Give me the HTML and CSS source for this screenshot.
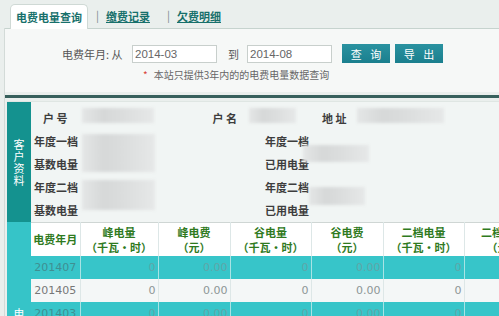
FILE: index.html
```html
<!DOCTYPE html>
<html lang="zh-CN">
<head>
  <meta charset="UTF-8">
  <title>电费电量查询</title>
  <link rel="stylesheet" href="styles.css">
</head>
<body>
  <div class="tabs">
    <span class="tab active">电费电量查询</span>
    <span class="sep">|</span>
    <a class="tab">缴费记录</a>
    <span class="sep">|</span>
    <a class="tab">欠费明细</a>
  </div>

  <div class="page">
    <div class="query">
      <div class="query-row">
        <span class="lbl">电费年月: 从</span>
        <input type="text" value="2014-03">
        <span class="to">到</span>
        <input type="text" value="2014-08">
        <button class="btn first">查 询</button>
        <button class="btn">导 出</button>
      </div>
      <div class="note"><span class="star">*</span>本站只提供3年内的的电费电量数据查询</div>
    </div>

    <div class="rule"></div>

    <div class="section info">
      <div class="side"><span class="side-text">客户资料</span></div>
      <div class="info-body">
        <div class="info-top">
          <span class="key k1">户 号</span>
          <span class="blur b1"></span>
          <span class="key k2">户 名</span>
          <span class="blur b2"></span>
          <span class="key k3">地 址</span>
          <span class="blur b3"></span>
        </div>
        <div class="info-grid">
          <span class="key r2 c1">年度一档</span>
          <span class="key r3 c1">基数电量</span>
          <span class="key r4 c1">年度二档</span>
          <span class="key r5 c1">基数电量</span>
          <span class="blur left top"></span>
          <span class="blur left bottom"></span>
          <span class="key r2 c2">年度一档</span>
          <span class="key r3 c2">已用电量</span>
          <span class="key r4 c2">年度二档</span>
          <span class="key r5 c2">已用电量</span>
          <span class="blur right top"></span>
          <span class="blur right bottom"></span>
        </div>
      </div>
    </div>

    <div class="section bill">
      <div class="side light"><span class="side-text">电费信息</span></div>
      <table class="grid">
        <colgroup>
          <col class="w-month">
          <col class="w-a">
          <col class="w-b">
          <col class="w-c">
          <col class="w-b">
          <col class="w-c">
          <col class="w-a">
        </colgroup>
        <thead>
          <tr>
            <th>电费年月</th>
            <th>峰电量<br>（千瓦·时）</th>
            <th>峰电费<br>（元）</th>
            <th>谷电量<br>（千瓦·时）</th>
            <th>谷电费<br>（元）</th>
            <th>二档电量<br>（千瓦·时）</th>
            <th>二档电费<br>（元）</th>
          </tr>
        </thead>
        <tbody>
          <tr class="alt">
            <td class="month">201407</td><td>0</td><td>0.00</td><td>0</td><td>0.00</td><td>0</td><td>0.00</td>
          </tr>
          <tr>
            <td class="month">201405</td><td>0</td><td>0.00</td><td>0</td><td>0.00</td><td>0</td><td>0.00</td>
          </tr>
          <tr class="alt">
            <td class="month">201403</td><td>0</td><td>0.00</td><td>0</td><td>0.00</td><td>0</td><td>0.00</td>
          </tr>
          <tr>
            <td class="month">201401</td><td>0</td><td>0.00</td><td>0</td><td>0.00</td><td>0</td><td>0.00</td>
          </tr>
        </tbody>
      </table>
    </div>
  </div>
</body>
</html>
```

FILE: styles.css
```css
body {
  margin: 0;
  background: #eaefed;
  font-family: "Noto Sans CJK SC", "Liberation Sans", sans-serif;
  font-size: 11px;
  color: #555;
  overflow: hidden;
  height: 316px;
}
.tabs {
  display: flex;
  align-items: flex-end;
  height: 28px;
  padding-left: 10px;
  box-sizing: border-box;
}
.tab {
  height: 24px;
  line-height: 24px;
  font-weight: 700;
  color: #17706b;
  text-decoration: underline;
}
.tab.active {
  width: 78px;
  box-sizing: border-box;
  text-align: center;
  background: #fff;
  border: 1px solid #cfd9d5;
  border-bottom: none;
  border-radius: 5px 5px 0 0;
  text-decoration: none;
  height: 25px;
  margin-bottom: -1px;
}
.sep {
  height: 24px;
  line-height: 23px;
  color: #7a8a86;
  margin: 0 7px 0 8px;
}
.tab + .sep + .tab + .sep {
  margin-left: 17px;
}
.page {
  margin-left: 4px;
  border-left: 1px solid #d3dbd8;
  height: 300px;
}
.query {
  height: 64px;
  box-sizing: border-box;
  background: #f6f8f7;
  border-top: 1px solid #c6d3ce;
  padding-top: 15px;
}
.query-row {
  display: flex;
  align-items: center;
  height: 19px;
  padding-left: 57px;
}
.lbl {
  width: 70px;
  color: #555;
}
.query-row input {
  width: 85px;
  height: 18px;
  box-sizing: border-box;
  border: 1px solid #c8cfcc;
  background: #fff;
  padding: 0 2px;
  font-family: "Liberation Sans", sans-serif;
  font-size: 11.5px;
  color: #666;
  margin: 0;
}
.to {
  margin: 0 8px 0 11px;
}
.btn {
  width: 48px;
  height: 19px;
  border: none;
  margin: 0 0 0 5px;
  padding: 0;
  background: linear-gradient(#2a92a0, #1a7f8e);
  color: #fff;
  font-family: "Noto Sans CJK SC", sans-serif;
  font-size: 11px;
  letter-spacing: 3px;
  text-indent: 3px;
}
.btn.first {
  margin-left: 10px;
}
.note {
  margin-top: 6px;
  padding-left: 138px;
  font-size: 10px;
  line-height: 12px;
  color: #666;
}
.star {
  color: #d9443a;
  margin-right: 6px;
}
.rule {
  height: 3px;
  margin-top: 3px;
  background: #37605c;
}
.section {
  display: flex;
  margin-left: 2px;
}
.info {
  margin-top: 3px;
  height: 121px;
  background: #f1f5f4;
  border-top: 1px solid #dfe6e3;
  box-sizing: border-box;
}
.bill {
  align-items: flex-start;
}
.side {
  width: 24px;
  flex: none;
  background: #14928f;
  color: #fff;
  display: flex;
  align-items: center;
  justify-content: center;
}
.side-text {
  width: 11px;
  font-size: 11px;
  line-height: 12px;
  word-break: break-all;
  text-align: center;
}
.side.light {
  background: #36c4c8;
  align-items: flex-start;
  box-sizing: border-box;
  padding-top: 85px;
  height: 200px;
}
.info-body {
  flex: 1;
  padding-top: 5px;
}
.key {
  font-weight: 700;
  color: #3d3d3d;
  font-size: 11px;
  line-height: 23px;
  white-space: nowrap;
}
.blur {
  display: block;
  background: linear-gradient(90deg, #e4e6e6 0%, #d6d8d8 30%, #dcdede 60%, #e6e8e8 100%);
  filter: blur(1.5px);
}
.info-top {
  display: flex;
  align-items: center;
  height: 23px;
}
.k1 { margin-left: 12px; }
.b1 { width: 72px; height: 15px; margin: -7px 0 0 14px; }
.k2 { margin-left: 59px; }
.b2 { width: 47px; height: 15px; margin: -6px 0 0 12px; }
.k3 { margin-left: 26px; }
.b3 { width: 87px; height: 15px; margin: -6px 0 0 10px; }
.info-grid {
  display: grid;
  grid-template-columns: 3px 46px 80px 103px 46px 80px;
  grid-template-rows: repeat(4, 23px);
}
.c1 { grid-column: 2; }
.c2 { grid-column: 5; padding-left: 2px; }
.r2 { grid-row: 1; }
.r3 { grid-row: 2; }
.r4 { grid-row: 3; }
.r5 { grid-row: 4; }
.blur.left {
  grid-column: 3;
  width: 73px;
  margin-left: 2px;
}
.blur.left.top { grid-row: 1 / span 2; height: 38px; align-self: center; }
.blur.left.bottom { grid-row: 3 / span 2; height: 30px; align-self: start; margin-top: 4px; }
.blur.right {
  grid-column: 6;
}
.blur.right.top { grid-row: 1 / span 2; width: 66px; height: 17px; align-self: center; margin-left: -6px; }
.blur.right.bottom { grid-row: 3 / span 2; width: 56px; height: 18px; align-self: start; margin-top: 11px; }
.grid {
  border-collapse: collapse;
  table-layout: fixed;
  width: 510px;
  flex: none;
  background: #f4f7f7;
}
.w-month { width: 49px; }
.w-a { width: 78px; }
.w-b { width: 72px; }
.w-c { width: 81px; }
.grid th {
  height: 33px;
  padding: 0;
  background: #fff;
  color: #2f7a1e;
  font-size: 11px;
  line-height: 15px;
  font-weight: 700;
  border-right: 1px solid #dde7e7;
  border-top: 1px solid #cfd6d4;
}
.grid td {
  height: 23px;
  padding: 0 2px 0 0;
  text-align: right;
  font-family: "DejaVu Sans", sans-serif;
  font-size: 11px;
  color: #8d9696;
  border-right: 1px solid #dde7e7;
}
.grid td.month {
  text-align: center;
  padding: 0;
  color: #777;
}
.grid tr.alt td {
  background: #37c5c9;
  color: #5fa6a8;
  border-right-color: #a9e3e4;
}
.grid tr.alt td.month {
  color: #3f8f92;
}
```
